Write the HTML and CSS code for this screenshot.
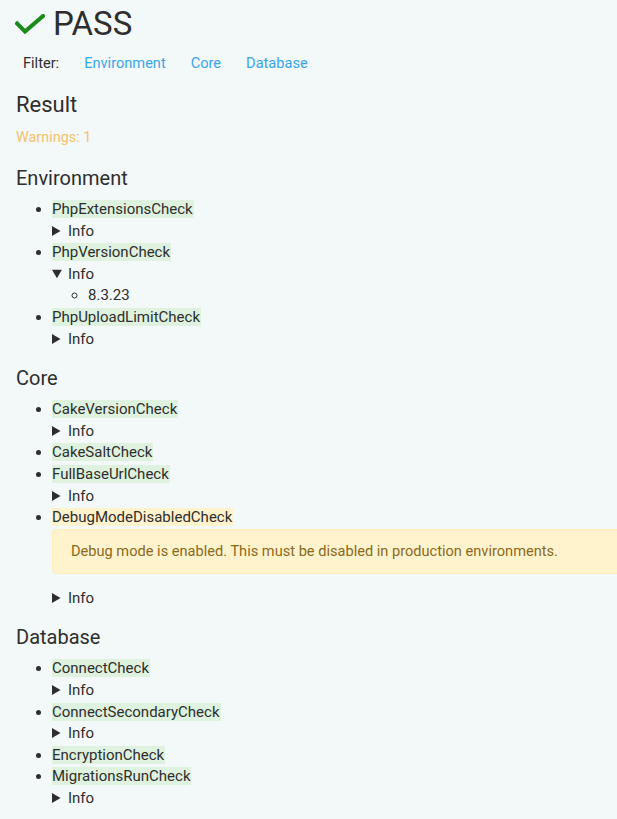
FILE: index.html
```html
<!DOCTYPE html>
<html>
<head>
<meta charset="utf-8">
<link rel="stylesheet" href="styles.css">
</head>
<body>
<h1 class="title"><svg class="check" width="30" height="21" viewBox="0 0 30 21"><polyline points="2,9.5 10,17.5 28,2" fill="none" stroke="#1b8a1b" stroke-width="4" stroke-linecap="square"/></svg>PASS</h1>
<div class="filter">
  <span>Filter:</span>
  <a href="#">Environment</a>
  <a href="#">Core</a>
  <a href="#">Database</a>
</div>
<h2 class="result">Result</h2>
<div class="warnings">Warnings: 1</div>

<h3 class="section">Environment</h3>
<ul class="checks">
  <li><span class="name ok">PhpExtensionsCheck</span>
    <details><summary>Info</summary></details></li>
  <li><span class="name ok">PhpVersionCheck</span>
    <details open><summary>Info</summary><ul class="info"><li>8.3.23</li></ul></details></li>
  <li><span class="name ok">PhpUploadLimitCheck</span>
    <details><summary>Info</summary></details></li>
</ul>

<h3 class="section">Core</h3>
<ul class="checks">
  <li><span class="name ok">CakeVersionCheck</span>
    <details><summary>Info</summary></details></li>
  <li><span class="name ok">CakeSaltCheck</span></li>
  <li><span class="name ok">FullBaseUrlCheck</span>
    <details><summary>Info</summary></details></li>
  <li><span class="name warn">DebugModeDisabledCheck</span>
    <div class="alert">Debug mode is enabled. This must be disabled in production environments.</div>
    <details><summary>Info</summary></details></li>
</ul>

<h3 class="section">Database</h3>
<ul class="checks">
  <li><span class="name ok">ConnectCheck</span>
    <details><summary>Info</summary></details></li>
  <li><span class="name ok">ConnectSecondaryCheck</span>
    <details><summary>Info</summary></details></li>
  <li><span class="name ok">EncryptionCheck</span></li>
  <li><span class="name ok">MigrationsRunCheck</span>
    <details><summary>Info</summary></details></li>
</ul>
</body>
</html>
```
FILE: styles.css
```css
html {
  overflow-x: hidden;
  background: #f3f8f8;
}
body {
  margin: 0;
  padding: 1px 16px 0 15px;
  font-family: Roboto, "Liberation Sans", sans-serif;
  color: #2e2e2e;
  font-size: 15px;
}
.title {
  margin: 0;
  font-size: 33px;
  font-weight: 400;
  line-height: 46px;
  display: flex;
  align-items: center;
}
.check {
  margin: 1px 8px 0 0;
  display: block;
}
.filter {
  margin-top: 6px;
  line-height: 20px;
  font-size: 14.6px;
  padding-left: 8px;
  display: flex;
  gap: 25px;
}
.filter a {
  color: #3aa5e8;
  text-decoration: none;
}
.result {
  margin: 18px 0 0 1px;
  font-size: 22px;
  font-weight: 400;
  line-height: 28px;
}
.warnings {
  margin: 9px 0 0 1px;
  font-size: 14.4px;
  line-height: 20px;
  color: #f6c36b;
}
.section {
  margin: 16px 0 0 1px;
  font-size: 20px;
  font-weight: 400;
  line-height: 24px;
}
.warnings + .section {
  margin-top: 18px;
}
.checks {
  margin: 9px 0 0;
  padding-left: 37px;
  line-height: 21.6px;
}
.name {
  padding: 0 1px 0 0;
}
.name.ok {
  background: #def2df;
}
.name.warn {
  background: #fff3cd;
}
summary {
  cursor: pointer;
}
.info {
  margin: 0;
  padding-left: 36px;
  list-style: circle;
}
.alert {
  background: #fff3cd;
  border: 1px solid #ffeeba;
  border-radius: 4px;
  color: #8a6a1c;
  font-size: 14.6px;
  padding: 11px 18px;
  margin: 0 -40px 14px 0;
  line-height: 21px;
}
```
